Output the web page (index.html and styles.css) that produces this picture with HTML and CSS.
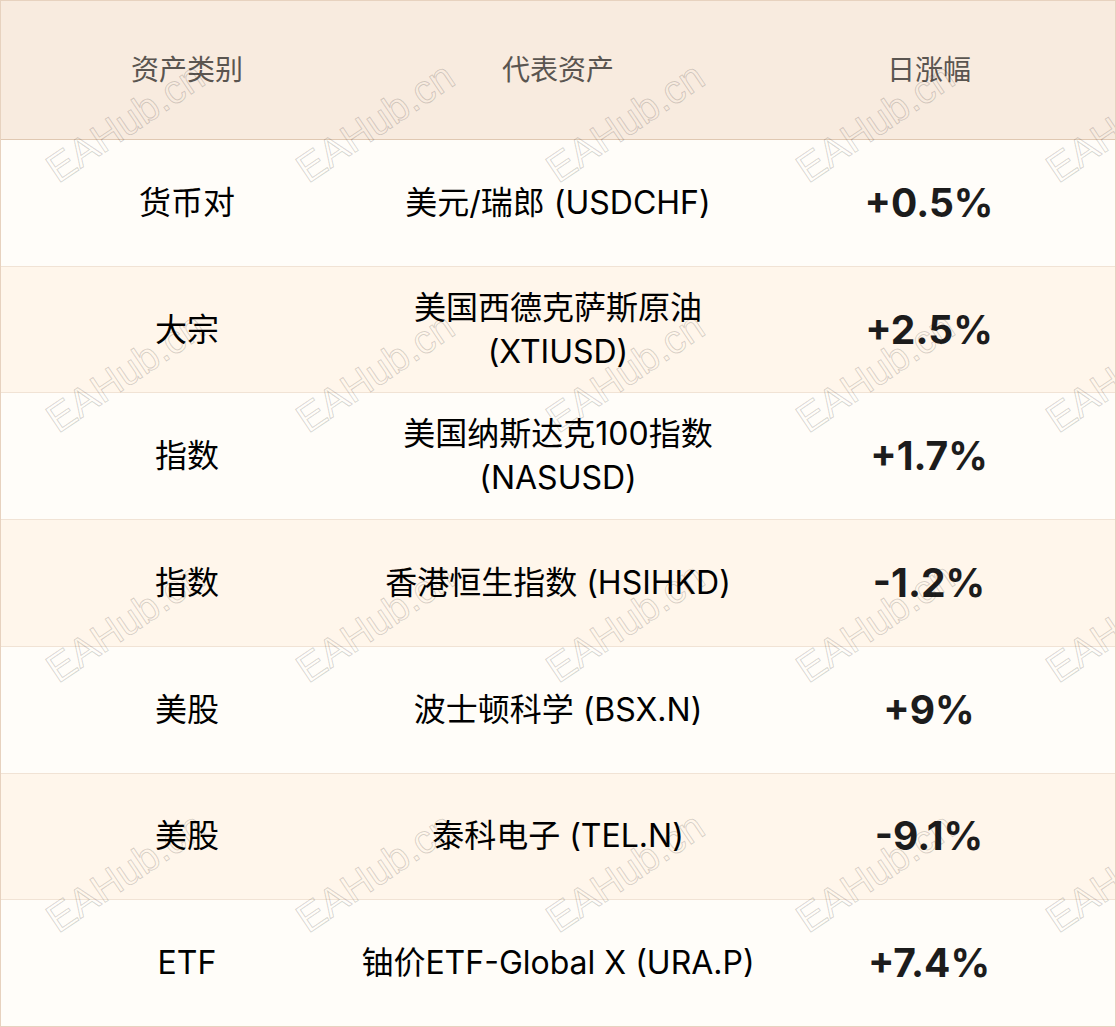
FILE: index.html
```html
<!DOCTYPE html>
<html lang="zh-CN">
<head>
<meta charset="utf-8">
<title>资产涨幅</title>
<link rel="stylesheet" href="styles.css">
</head>
<body>
<div class="table">
  <div class="row head">
    <div class="cell">资产类别</div>
    <div class="cell">代表资产</div>
    <div class="cell">日涨幅</div>
  </div>
  <div class="row odd">
    <div class="cell">货币对</div>
    <div class="cell"><span class="txt">美元/瑞郎 (USDCHF)</span></div>
    <div class="cell pct">+0.5%</div>
  </div>
  <div class="row even">
    <div class="cell">大宗</div>
    <div class="cell"><span class="txt">美国西德克萨斯原油<br>(XTIUSD)</span></div>
    <div class="cell pct">+2.5%</div>
  </div>
  <div class="row odd">
    <div class="cell">指数</div>
    <div class="cell"><span class="txt">美国纳斯达克100指数<br>(NASUSD)</span></div>
    <div class="cell pct">+1.7%</div>
  </div>
  <div class="row even">
    <div class="cell">指数</div>
    <div class="cell"><span class="txt">香港恒生指数 (HSIHKD)</span></div>
    <div class="cell pct">-1.2%</div>
  </div>
  <div class="row odd">
    <div class="cell">美股</div>
    <div class="cell"><span class="txt">波士顿科学 (BSX.N)</span></div>
    <div class="cell pct">+9%</div>
  </div>
  <div class="row even">
    <div class="cell">美股</div>
    <div class="cell"><span class="txt">泰科电子 (TEL.N)</span></div>
    <div class="cell pct">-9.1%</div>
  </div>
  <div class="row odd">
    <div class="cell">ETF</div>
    <div class="cell"><span class="txt">铀价ETF-Global X (URA.P)</span></div>
    <div class="cell pct">+7.4%</div>
  </div>

  <div class="watermarks" aria-hidden="true">
    <span class="wm"><i>EAHub.cn</i></span><span class="wm"><i>EAHub.cn</i></span><span class="wm"><i>EAHub.cn</i></span><span class="wm"><i>EAHub.cn</i></span><span class="wm"><i>EAHub.cn</i></span>
    <span class="wm"><i>EAHub.cn</i></span><span class="wm"><i>EAHub.cn</i></span><span class="wm"><i>EAHub.cn</i></span><span class="wm"><i>EAHub.cn</i></span><span class="wm"><i>EAHub.cn</i></span>
    <span class="wm"><i>EAHub.cn</i></span><span class="wm"><i>EAHub.cn</i></span><span class="wm"><i>EAHub.cn</i></span><span class="wm"><i>EAHub.cn</i></span><span class="wm"><i>EAHub.cn</i></span>
    <span class="wm"><i>EAHub.cn</i></span><span class="wm"><i>EAHub.cn</i></span><span class="wm"><i>EAHub.cn</i></span><span class="wm"><i>EAHub.cn</i></span><span class="wm"><i>EAHub.cn</i></span>
  </div>
</div>
</body>
</html>
```

FILE: styles.css
```css
html, body {
  margin: 0;
  padding: 0;
  background: #fffdf9;
}

.table {
  position: relative;
  width: 1116px;
  height: 1027px;
  box-sizing: border-box;
  border: 1px solid #e7d2bf;
  display: flex;
  flex-direction: column;
  overflow: hidden;
  font-family: "Inter", "Noto Sans CJK SC", sans-serif;
  color: #000000;
}

.row {
  display: grid;
  grid-template-columns: 372px 370px 372px;
  flex: 1 1 0;
  min-height: 0;
}

.row + .row {
  border-top: 1px solid #f1e3d5;
}

.head {
  flex: 0 0 138px;
  background: #f8ebdf;
  border-bottom: 1px solid #e0c8b2;
}

.head + .row {
  border-top: none;
}

.odd {
  background: #fffdf9;
}

.even {
  background: #fff6eb;
}

.cell {
  display: flex;
  align-items: center;
  justify-content: center;
  text-align: center;
  font-size: 32px;
  line-height: 44px;
  font-weight: 400;
}

.head .cell {
  font-size: 28px;
  color: #5a5550;
}

.txt {
  white-space: nowrap;
}

.pct {
  font-size: 39px;
  font-weight: 700;
  color: #1c1c1c;
}

.watermarks {
  position: absolute;
  left: -1px;
  top: -4px;
  display: grid;
  grid-template-columns: repeat(5, 250px);
  grid-template-rows: repeat(4, 250px);
  pointer-events: none;
}

.wm {
  display: flex;
  align-items: center;
  justify-content: center;
}

.wm i {
  font-style: normal;
  font-family: "Liberation Sans", sans-serif;
  font-size: 40px;
  line-height: 1;
  color: transparent;
  -webkit-text-stroke: 1px rgba(0, 0, 0, 0.17);
  transform: rotate(-34deg);
  white-space: nowrap;
}
```
